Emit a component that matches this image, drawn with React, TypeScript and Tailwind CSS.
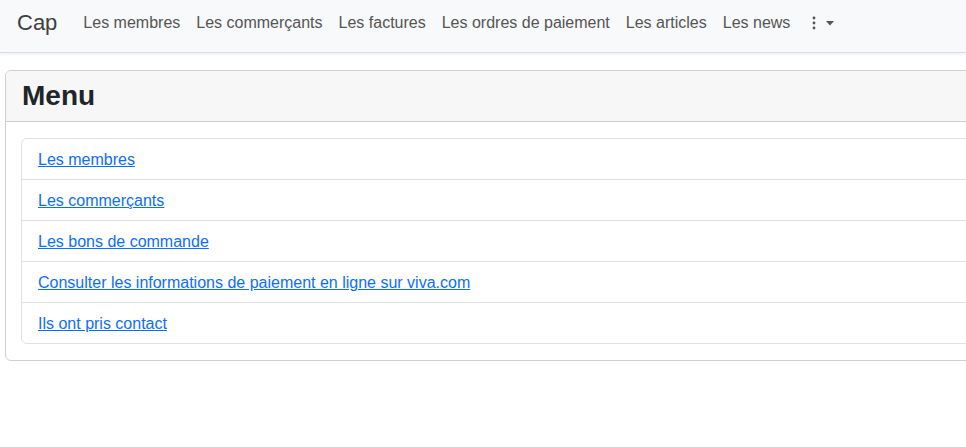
const navLinks = [
  "Les membres",
  "Les commerçants",
  "Les factures",
  "Les ordres de paiement",
  "Les articles",
  "Les news",
];

const menuItems = [
  "Les membres",
  "Les commerçants",
  "Les bons de commande",
  "Consulter les informations de paiement en ligne sur viva.com",
  "Ils ont pris contact",
];

export default function App() {
  return (
    <div className="min-h-[447px] w-[966px] overflow-hidden bg-white font-['Liberation_Sans',Arial,sans-serif] text-[#212529]">
      <nav className="flex h-[53px] items-center border-b border-[#dcdcdc] bg-[#f8f9fa] pb-[6px] pl-[17px] shadow-[0_1px_3px_rgba(0,0,0,0.08)]">
        <a className="mr-[18px] text-[22px] leading-[30px] text-[#404040]">Cap</a>
        <ul className="flex items-center">
          {navLinks.map((l) => (
            <li key={l}>
              <a className="block px-2 text-[16px] leading-6 text-[#555555]">{l}</a>
            </li>
          ))}
          <li className="ml-[6px] flex items-center gap-[10px] px-2 text-[#555555]">
            <svg width="4" height="14" viewBox="0 0 4 14" fill="currentColor">
              <circle cx="2" cy="2" r="1.4" />
              <circle cx="2" cy="7" r="1.4" />
              <circle cx="2" cy="12" r="1.4" />
            </svg>
            <svg width="8" height="5" viewBox="0 0 8 5" fill="currentColor">
              <path d="M0 0h8L4 4.5z" />
            </svg>
          </li>
        </ul>
      </nav>

      <div className="pl-[5px] pt-[17px]">
        <div className="w-[1000px] rounded-[6px] border border-[#d0d0d0]">
          <div className="flex h-[51px] items-center rounded-t-[6px] border-b border-[#cfcfcf] bg-[#f7f7f7] px-4">
            <h2 className="text-[28px] font-bold leading-none text-[#212529]">Menu</h2>
          </div>
          <div className="px-[15px] py-4">
            <ul className="rounded-[6px] border border-[#dee2e6]">
              {menuItems.map((m, i) => (
                <li
                  key={m}
                  className={`flex items-center px-4 pt-[2px] ${i > 0 ? "h-[41px] border-t border-[#dee2e6]" : "h-[40px]"}`}
                >
                  <a className="text-[16px] text-[#0d6efd] underline">{m}</a>
                </li>
              ))}
            </ul>
          </div>
        </div>
      </div>
    </div>
  );
}
